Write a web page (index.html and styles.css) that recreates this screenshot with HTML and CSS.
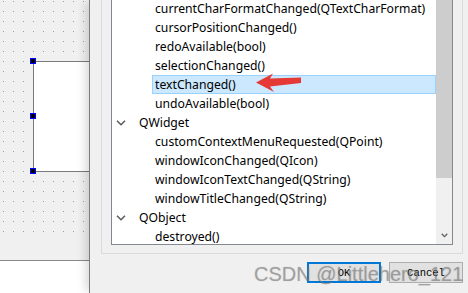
FILE: index.html
```html
<!DOCTYPE html>
<html lang="en">
<head>
    <meta charset="UTF-8">
    <title>Signals</title>
    <link rel="stylesheet" href="styles.css">
</head>
<body>
    <div class="canvas">
        <div class="grid">
            <div class="form">
                <span class="handle handle-top"></span>
                <span class="handle handle-mid"></span>
                <span class="handle handle-bottom"></span>
            </div>
        </div>
        <div class="grid-foot"></div>
        <div class="outside"></div>
    </div>

    <div class="dialog">
        <div class="group">
            <div class="list">
                <div class="items">
                    <div class="row child">currentCharFormatChanged(QTextCharFormat)</div>
                    <div class="row child">cursorPositionChanged()</div>
                    <div class="row child">redoAvailable(bool)</div>
                    <div class="row child">selectionChanged()</div>
                    <div class="row child selected">textChanged()</div>
                    <div class="row child">undoAvailable(bool)</div>
                    <div class="row parent">
                        <svg class="chevron" width="10" height="6" viewBox="0 0 10 6"><path d="M1 0.8 L5 4.8 L9 0.8" fill="none" stroke="#5a5a5a" stroke-width="1.5"/></svg>
                        QWidget
                    </div>
                    <div class="row child">customContextMenuRequested(QPoint)</div>
                    <div class="row child">windowIconChanged(QIcon)</div>
                    <div class="row child">windowIconTextChanged(QString)</div>
                    <div class="row child">windowTitleChanged(QString)</div>
                    <div class="row parent">
                        <svg class="chevron" width="10" height="6" viewBox="0 0 10 6"><path d="M1 0.8 L5 4.8 L9 0.8" fill="none" stroke="#5a5a5a" stroke-width="1.5"/></svg>
                        QObject
                    </div>
                    <div class="row child">destroyed()</div>
                </div>
                <div class="scrollbar">
                    <div class="thumb"></div>
                    <div class="track"></div>
                    <div class="scroll-btn">
                        <svg width="7" height="5" viewBox="0 0 7 5"><path d="M0.7 0.7 L3.5 3.6 L6.3 0.7" fill="none" stroke="#606060" stroke-width="1.3"/></svg>
                    </div>
                </div>
            </div>
        </div>
        <div class="buttons">
            <button class="btn btn-default">OK</button>
            <button class="btn">Cancel</button>
        </div>
    </div>

    <!-- annotation arrow pointing at the chosen signal -->
    <svg class="pointer" width="50" height="22" viewBox="0 0 50 22">
        <polygon points="1,10.5 18,1.5 15,6.5 46,5.5 46,11 15,14.5 19,20" fill="#e53935"/>
    </svg>

    <div class="watermark">CSDN @Littlehero_121</div>
</body>
</html>
```

FILE: styles.css
```css
html, body {
    margin: 0;
    padding: 0;
}
body {
    width: 468px;
    height: 293px;
    overflow: hidden;
    position: relative;
    display: flex;
    background: #f0f0f0;
    font-family: "Noto Sans", "Noto Sans CJK SC", sans-serif;
}

/* designer canvas on the left */
.canvas {
    width: 89px;
    flex: none;
    display: flex;
    flex-direction: column;
    overflow: hidden;
}
.grid {
    height: 240px;
    flex: none;
    background-color: #f0f0f0;
    background-image: conic-gradient(from 270deg at 1px 1px, #9c9c9c 90deg, transparent 0);
    background-size: 10px 10px;
    background-position: 3px 1px;
    padding-top: 61px;
    box-sizing: border-box;
}
.grid-foot {
    height: 21px;
    flex: none;
    background: #f0f0f0;
    border-bottom: 1px solid #8a8a8a;
    box-sizing: border-box;
}
.outside {
    flex: 1;
    background: #fff;
}
.form {
    position: relative;
    margin-left: 33px;
    width: 70px;
    height: 111px;
    box-sizing: border-box;
    background: #fff;
    border: 1px solid #7a7a7a;
    border-right: none;
}
.handle {
    position: absolute;
    left: -4px;
    width: 4px;
    height: 4px;
    background: #000;
    border: 1px solid #0000ff;
}
.handle-top { top: -4px; }
.handle-mid { top: 51px; }
.handle-bottom { top: 106px; }

/* signal dialog */
.dialog {
    flex: 1;
    position: relative;
    z-index: 1;
    display: flex;
    flex-direction: column;
    background: #f0f0f0;
    border-left: 1px solid #7c7c7c;
    box-shadow: -6px 0 8px -2px rgba(0, 0, 0, 0.14);
}
.group {
    margin: 0 5px 0 11px;
    padding: 0 9px 8px 9px;
    border: 1px solid #dadada;
    border-top: none;
}
.list {
    height: 245px;
    box-sizing: border-box;
    display: flex;
    background: #fff;
    border: 1px solid #828790;
    border-top: none;
}
.items {
    flex: 1;
    overflow: hidden;
    margin-top: -1px;
}
.row {
    height: 19px;
    line-height: 19px;
    font-size: 12.2px;
    color: #000;
    white-space: nowrap;
    box-sizing: border-box;
}
.child {
    margin-left: 40px;
    padding-left: 2px;
    border: 1px solid transparent;
    line-height: 17px;
}
.selected {
    background: #cce8ff;
    border-color: #99d1ff;
}
.parent {
    display: flex;
    align-items: center;
    padding-left: 4px;
}
.chevron {
    margin-right: 13px;
}
.scrollbar {
    width: 16px;
    flex: none;
    display: flex;
    flex-direction: column;
    background: #f0f0f0;
}
.thumb {
    height: 178px;
    background: #cdcdcd;
}
.track {
    flex: 1;
}
.scroll-btn {
    height: 17px;
    display: flex;
    align-items: center;
    justify-content: center;
}

.buttons {
    display: flex;
    justify-content: flex-end;
    gap: 8px;
    margin: 8px 5px 0 0;
}
.btn {
    width: 74px;
    height: 21px;
    padding: 0;
    background: #e1e1e1;
    border: 1px solid #adadad;
    font-family: "Liberation Mono", monospace;
    font-size: 10.5px;
    color: #000;
}
.btn-default {
    border: 2px solid #0078d7;
}

/* overlays */
.pointer {
    position: absolute;
    z-index: 2;
    left: 255px;
    top: 72px;
}
.watermark {
    position: absolute;
    z-index: 2;
    left: 254px;
    top: 263px;
    font-family: "Liberation Sans", Arial, sans-serif;
    font-size: 20px;
    line-height: 23px;
    color: rgba(125, 125, 125, 0.5);
    text-shadow: 0 0 1px rgba(90, 90, 90, 0.35);
    white-space: nowrap;
}
```
